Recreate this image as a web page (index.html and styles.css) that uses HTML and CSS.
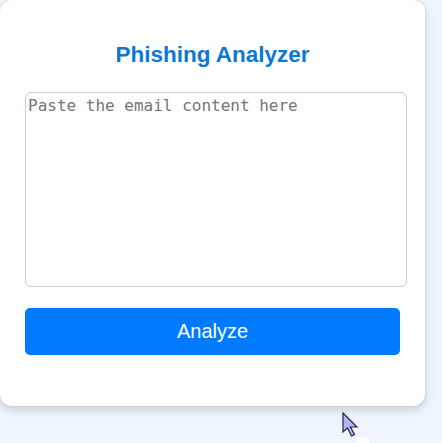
FILE: index.html
```html
<!DOCTYPE html>
<html>
<head>
<meta charset="utf-8">
<link rel="stylesheet" href="styles.css">
</head>
<body>
<div class="card">
  <h2 class="title">Phishing Analyzer</h2>
  <textarea class="input" placeholder="Paste the email content here"></textarea>
  <button class="btn">Analyze</button>
</div>
<svg class="cursor" width="18" height="26" viewBox="0 0 18 26">
  <path d="M1 1 L1 20 L5.5 16 L9.5 24 L12.5 22.5 L8.5 15 L15 15 Z" fill="#b4b4f4" stroke="#222244" stroke-width="1.2" stroke-linejoin="miter"/>
</svg>
<div class="blip"></div>
</body>
</html>
```

FILE: styles.css
```css
html, body {
  margin: 0;
  padding: 0;
}
body {
  background: #eef5fd;
  width: 442px;
  height: 443px;
  overflow: hidden;
  position: relative;
  font-family: "Liberation Sans", Arial, sans-serif;
}
.card {
  box-sizing: border-box;
  width: 425px;
  height: 406px;
  background: #fff;
  border-radius: 12px;
  box-shadow: 0 4px 10px rgba(0, 0, 0, 0.16), 0 0 2px rgba(0, 0, 0, 0.12);
  padding: 25px;
  display: flex;
  flex-direction: column;
}
.title {
  margin: 17px 0 25px;
  font-size: 22.5px;
  line-height: 25px;
  font-weight: bold;
  color: #0a78d4;
  text-align: center;
}
.input {
  box-sizing: border-box;
  width: 382px;
  height: 195px;
  margin: 0;
  padding: 3px 2px 2px;
  border: 1px solid #ccc;
  border-radius: 6px;
  font-family: "DejaVu Sans Mono", monospace;
  font-size: 16px;
  resize: none;
  outline: none;
}
.input::placeholder {
  color: #757575;
}
.btn {
  margin-top: 21px;
  width: 375px;
  height: 47px;
  border: none;
  border-radius: 5px;
  background: #007bff;
  color: #fff;
  font-family: "Liberation Sans", Arial, sans-serif;
  font-size: 20px;
  padding: 0;
}
.cursor {
  position: absolute;
  left: 342px;
  top: 412px;
}
.blip {
  position: absolute;
  left: 357px;
  top: 437px;
  width: 12px;
  height: 6px;
  background: #fff;
}
```
